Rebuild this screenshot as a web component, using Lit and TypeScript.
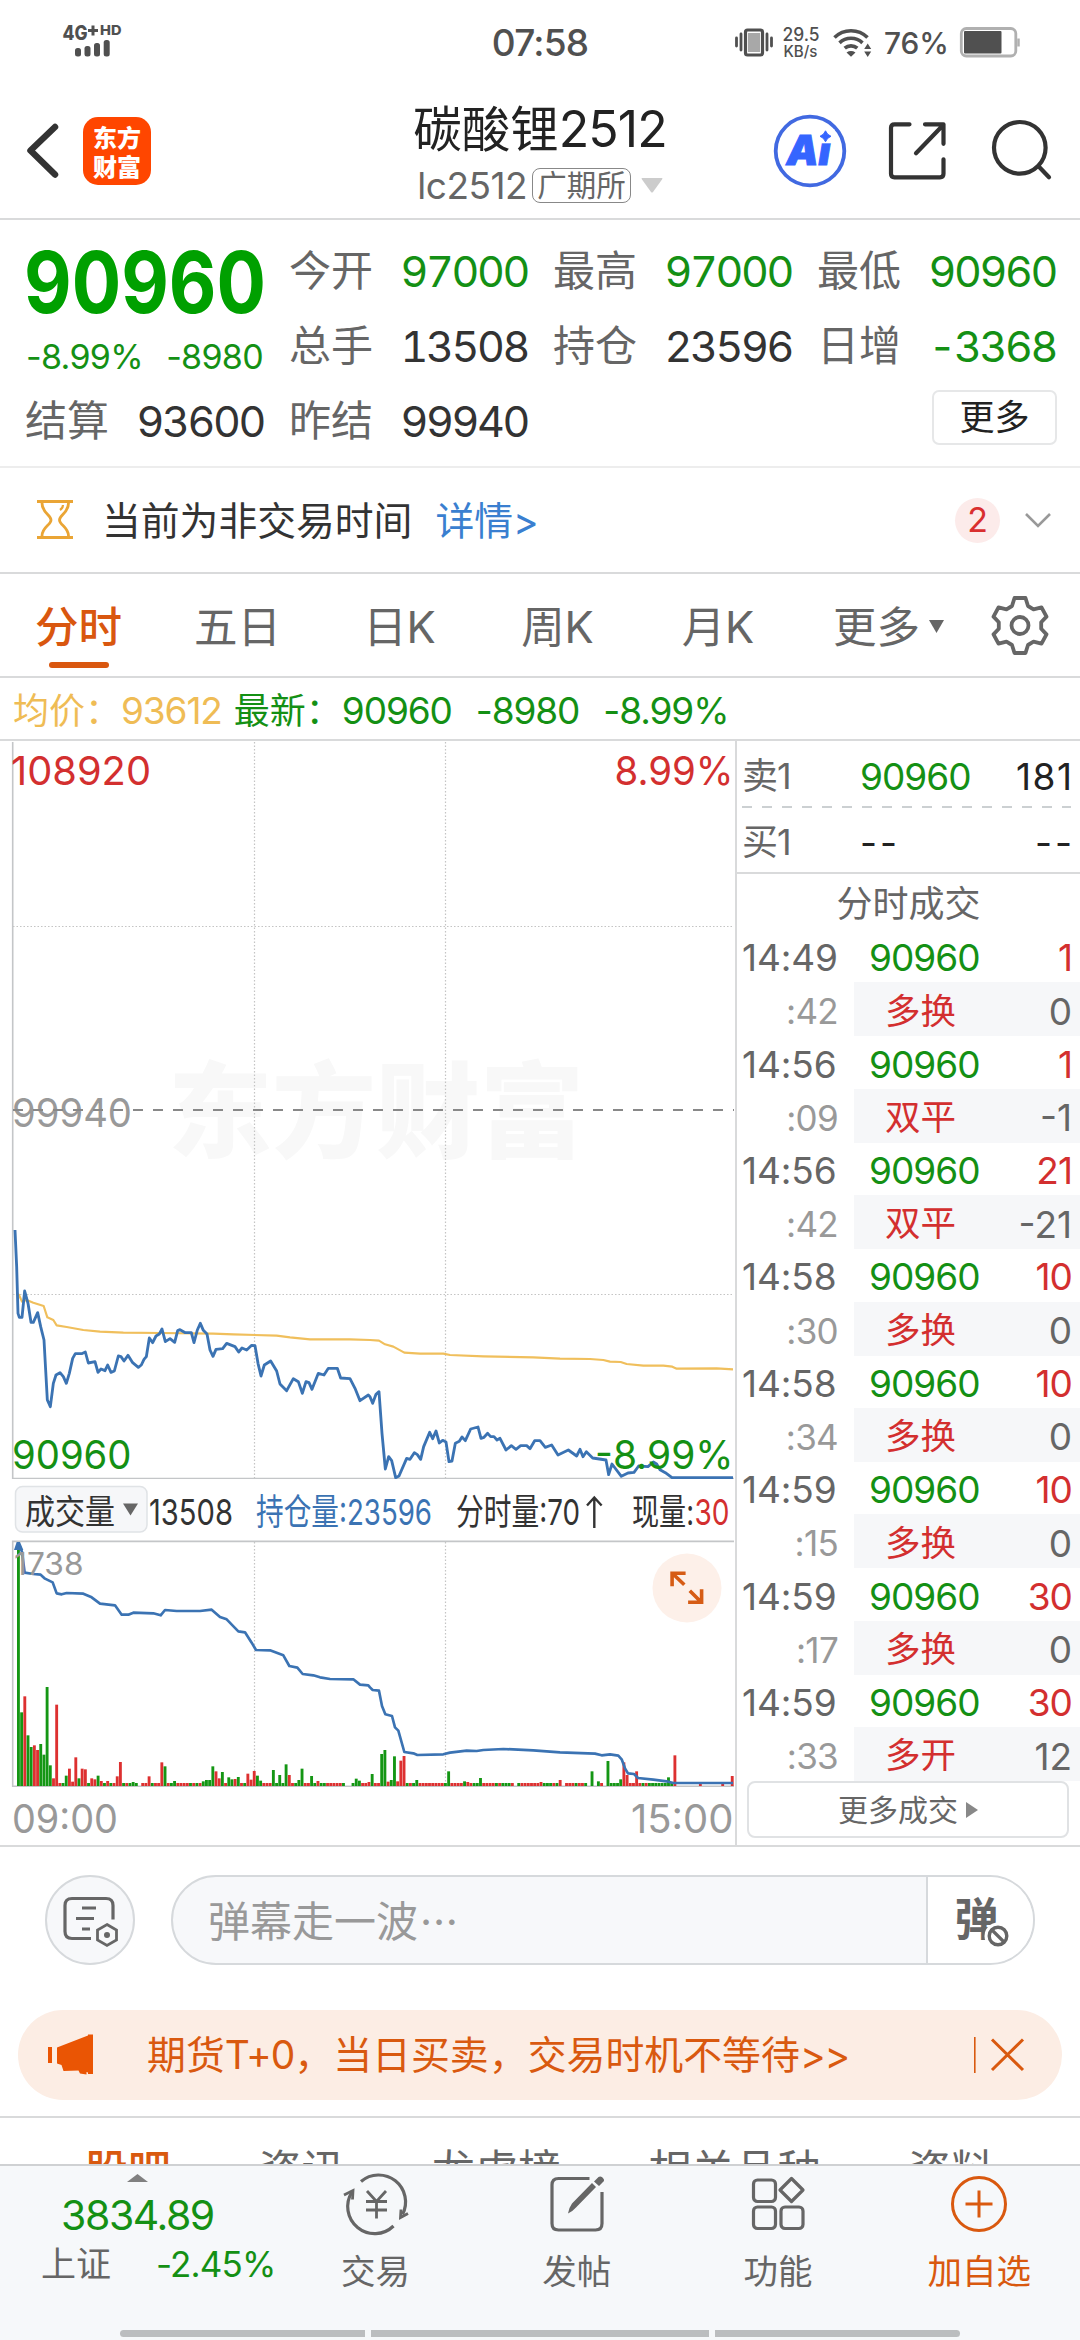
import { LitElement, html, svg, css } from "lit";
import { customElement } from "lit/decorators.js";

const PRICE =
  "45,150 50,260 54,400 58,412 66,412 74,333 84,370 93,427 100,427 113,398 122,440 132,480 137,570 142,660 151,680 160,610 168,585 180,578 190,590 199,610 208,580 218,535 226,521 245,521 256,516 265,549 285,545 294,577 303,567 315,572 323,555 333,577 343,573 355,528 363,530 372,543 384,526 398,548 415,562 424,555 432,538 439,530 448,474 458,488 468,468 478,462 486,447 496,485 510,476 524,487 533,452 540,449 556,458 574,458 582,488 592,450 601,430 610,451 621,462 630,510 639,529 648,508 668,506 680,490 705,500 716,516 726,504 740,510 755,496 765,497 774,550 783,588 793,555 812,543 830,573 840,612 860,632 880,596 895,605 907,640 918,605 927,608 936,628 955,580 972,585 985,565 1012,565 1022,594 1050,596 1065,625 1080,662 1105,645 1110,650 1118,670 1128,643 1137,635 1146,760 1156,867 1166,830 1175,842 1187,893 1197,888 1220,835 1230,838 1243,818 1252,824 1262,838 1271,800 1289,757 1298,776 1308,753 1318,789 1328,781 1338,786 1347,845 1356,843 1366,790 1378,784 1386,771 1396,782 1412,747 1434,741 1443,775 1452,772 1463,760 1472,770 1482,770 1491,780 1500,775 1518,810 1534,797 1548,808 1562,797 1580,797 1590,806 1604,782 1620,782 1636,802 1655,795 1674,825 1705,810 1730,828 1740,808 1749,830 1759,815 1778,834 1818,840 1826,884 1836,852 1864,889 1884,879 1902,877 1916,858 1944,860 1960,846 1970,852 1980,869 1996,878 2016,893 2199,893";
const AVERAGE =
  "50,340 57,345 66,365 80,360 100,368 131,378 142,412 160,420 170,436 200,441 250,450 300,455 370,458 480,459 640,461 700,463 830,467 870,472 930,478 1050,478 1110,480 1137,482 1155,493 1180,500 1213,518 1260,521 1330,521 1350,525 1450,529 1600,532 1680,536 1770,537 1810,540 1830,545 1862,546 1880,552 1930,557 1990,557 2017,560 2030,566 2150,565 2199,568";
const INTEREST =
  "55,190 66,215 74,278 100,282 122,284 135,296 158,307 170,340 185,343 200,339 250,341 275,352 300,371 345,376 365,404 385,404 400,398 460,400 482,406 495,390 530,393 600,393 635,389 660,411 680,418 715,454 735,457 755,488 768,510 810,511 850,526 868,558 892,563 908,582 940,586 960,592 990,597 1060,598 1080,614 1105,616 1110,622 1118,630 1137,632 1146,678 1156,703 1176,708 1185,742 1195,752 1213,816 1240,820 1252,825 1330,823 1350,818 1400,812 1430,813 1450,810 1510,807 1600,811 1680,817 1785,821 1805,826 1830,823 1855,827 1865,838 1875,865 1884,880 1902,882 1914,894 1960,899 2000,904 2020,909 2199,909";

/* minute index -> colour and height of the volume bar, where it stands out */
const TALL: Record<number, [string, number]> = {
  0: ["g", 713], 1: ["g", 221], 2: ["r", 269], 3: ["g", 152], 4: ["g", 117], 5: ["r", 122], 6: ["r", 108], 7: ["g", 126],
  8: ["g", 94], 9: ["g", 297], 10: ["g", 62], 11: ["r", 23], 12: ["r", 244], 15: ["g", 31], 16: ["r", 52], 17: ["r", 13],
  18: ["r", 86], 19: ["g", 23], 20: ["r", 52], 21: ["r", 50], 23: ["r", 23], 24: ["r", 20], 25: ["g", 31], 26: ["r", 15],
  28: ["r", 15], 31: ["r", 29], 32: ["r", 72], 36: ["g", 12], 41: ["r", 29], 45: ["r", 71], 46: ["g", 59], 49: ["g", 15],
  58: ["g", 14], 59: ["g", 18], 60: ["g", 18], 61: ["g", 59], 62: ["r", 44], 63: ["r", 23], 64: ["g", 42], 66: ["g", 26],
  67: ["g", 20], 68: ["r", 21], 69: ["g", 27], 72: ["r", 37], 73: ["r", 19], 74: ["r", 45], 75: ["g", 31], 76: ["g", 16],
  80: ["g", 48], 82: ["g", 33], 84: ["g", 65], 85: ["r", 33], 88: ["g", 18], 89: ["g", 52], 92: ["g", 30], 94: ["r", 15],
  106: ["g", 22], 107: ["g", 16], 110: ["r", 12], 111: ["g", 36], 114: ["g", 96], 115: ["g", 108], 116: ["r", 13],
  117: ["g", 18], 118: ["g", 89], 119: ["r", 14], 120: ["r", 76], 121: ["r", 90], 125: ["g", 18], 135: ["g", 44],
  140: ["g", 14], 141: ["r", 12], 145: ["g", 24], 164: ["r", 12], 170: ["r", 18], 180: ["g", 44], 182: ["g", 14],
  185: ["g", 75], 189: ["g", 20], 190: ["r", 71], 191: ["r", 33], 194: ["r", 44], 204: ["g", 26], 206: ["r", 92],
  214: ["r", 6], 221: ["r", 6], 224: ["r", 30],
};
const EMPTY = new Set([38, 103, 104, 156, 171, 179, 181, 184]);
const LOW_GREEN = new Set([
  14, 22, 27, 29, 33, 35, 37, 42, 48, 54, 56, 71, 81, 83, 87, 93, 95, 96, 102, 105, 122, 124, 134, 143, 144, 150, 152, 153,
  154, 157, 165, 166, 167, 169, 175, 178, 186, 187, 188, 196, 198, 199, 200, 201, 202, 203, 205,
]);

const TRADES = [
  ["14:49", "1", ":42", "多换", "0"],
  ["14:56", "1", ":09", "双平", "-1"],
  ["14:56", "21", ":42", "双平", "-21"],
  ["14:58", "10", ":30", "多换", "0"],
  ["14:58", "10", ":34", "多换", "0"],
  ["14:59", "10", ":15", "多换", "0"],
  ["14:59", "30", ":17", "多换", "0"],
  ["14:59", "30", ":33", "多开", "12"],
];

const volumeBars = () => {
  const out = [];
  for (let i = 0; i < 225; i++) {
    const tall = TALL[i];
    if (!tall && (EMPTY.has(i) || i > 206)) continue;
    const [c, h] = tall ?? [LOW_GREEN.has(i) ? "g" : "r", 9];
    out.push(svg`<rect x=${(51 + 9.56 * i).toFixed(1)} y=${918 - h} width="8.6" height=${h} fill=${c === "g" ? "#149614" : "#dd3030"} />`);
  }
  return out;
};

@customElement("status-bar")
class StatusBar extends LitElement {
  static styles = css`
    :host { display: grid; grid-template-columns: 1fr auto 1fr; height: 84px; align-items: center; color: #505050; }
    .time { font-size: 37px; font-weight: 500; letter-spacing: -0.8px; line-height: 1; }
    .left { padding-left: 60px; }
    .right { display: flex; justify-content: flex-end; padding-right: 58px; }
    svg { display: block; }
  `;
  render() {
    return html`
      <div class="left">
        <svg width="70" height="84" viewBox="60 0 70 84" fill="#505050">
          <text x="62.5" y="40" font-size="20" font-weight="800" textLength="25" lengthAdjust="spacingAndGlyphs">4G</text>
          <path d="M88 30.5h10M93 25.5v10" stroke="#505050" stroke-width="3" />
          <text x="100" y="35.3" font-size="13.5" font-weight="800" textLength="21.5" lengthAdjust="spacingAndGlyphs">HD</text>
          <rect x="75" y="48" width="6" height="8.5" rx="2.5" /><rect x="84.5" y="46" width="6" height="10.5" rx="2.5" />
          <rect x="94" y="43" width="6" height="13.5" rx="2.5" /><rect x="103.7" y="40" width="6" height="16.5" rx="2.5" />
        </svg>
      </div>
      <div class="time">07:58</div>
      <div class="right">
        <svg width="290" height="84" viewBox="732 0 290 84" fill="#505050">
          <rect x="745.5" y="30" width="17" height="25" rx="2" fill="none" stroke="#505050" stroke-width="3.2" />
          <rect x="748" y="33" width="12" height="19" fill="#a8a8a8" />
          <path d="M741 34v16M736.5 38v8M767 34v16M771.5 38v8" stroke="#505050" stroke-width="2.8" stroke-linecap="round" />
          <text x="782.5" y="41" font-size="18" font-weight="500" textLength="37" lengthAdjust="spacingAndGlyphs">29.5</text>
          <text x="783.5" y="57" font-size="15.5" font-weight="500" textLength="34" lengthAdjust="spacingAndGlyphs">KB/s</text>
          <g fill="none" stroke="#505050" stroke-width="3.6">
            <path d="M834.5 37.5a23.5 23.5 0 0 1 33 0" /><path d="M839.5 42.8a17 17 0 0 1 23 0" /><path d="M844.7 48.2a9.6 9.6 0 0 1 12.6 0" />
          </g>
          <path d="M846.5 52.5q4.5-2.8 9 0L851 56.8zM867.7 43.5l3.5 5.5h-7zM867.7 57l3.5-5.5h-7z" />
          <text x="884" y="54" font-size="29.5" font-weight="500" textLength="65" lengthAdjust="spacingAndGlyphs">76%</text>
          <rect x="961.3" y="28.5" width="54.5" height="27.5" rx="5" fill="none" stroke="#b0b0b0" stroke-width="2.8" />
          <rect x="964" y="31" width="37.5" height="22.5" rx="1" />
          <path d="M1018.5 38.5v8" stroke="#b0b0b0" stroke-width="2.5" />
        </svg>
      </div>
    `;
  }
}

@customElement("page-header")
class PageHeader extends LitElement {
  static styles = css`
    :host { display: grid; grid-template-columns: 1fr auto 1fr; height: 134px; align-items: center; border-bottom: 2px solid #d9dadb; }
    .left, .right { display: flex; align-items: center; }
    .left { padding-left: 24px; }
    .logo { display: grid; place-content: center; width: 68px; height: 68px; margin-left: 23px; border-radius: 15px; background: #ff4600; color: #fff; font: 900 24px/29px "Noto Sans CJK SC", sans-serif; }
    .mid { display: flex; flex-direction: column; align-items: center; }
    .name { font-size: 48.5px; line-height: 60px; color: #222; }
    .name span { letter-spacing: -0.9px; font-size: 50px; }
    .sub { display: flex; align-items: center; margin-top: 8px; height: 36px; color: #666; }
    .code { font-size: 37px; letter-spacing: -0.5px; line-height: 1; }
    .tag { margin-left: 5px; border: 1.5px solid #888; border-radius: 8px; height: 33px; padding: 0 4px; font-size: 29.5px; line-height: 32px; }
    .sub svg { margin-left: 10px; }
    .right { justify-content: flex-end; padding-right: 27px; }
    svg { display: block; }
    .share { margin-left: 38px; }
    .find { margin-left: 40px; }
  `;
  render() {
    return html`
      <div class="left">
        <svg width="36" height="66" viewBox="24 119 36 66" fill="none" stroke="#333" stroke-width="6.5" stroke-linecap="round" stroke-linejoin="round"><path d="M55 128L30.5 151.5 55 175.5" /></svg>
        <div class="logo"><span>东方</span><span>财富</span></div>
      </div>
      <div class="mid">
        <div class="name">碳酸锂<span>2512</span></div>
        <div class="sub">
          <span class="code">lc2512</span><span class="tag">广期所</span>
          <svg width="22" height="15" viewBox="0 0 22 15"><path d="M1 0h20q1 0 0 1.5L12 14q-1 1-2 0L1 1.5Q0 0 1 0z" fill="#ccc" /></svg>
        </div>
      </div>
      <div class="right">
        <svg width="74" height="74" viewBox="771.5 114.7 74 74">
          <circle cx="808.5" cy="151.7" r="34.3" fill="#fff" stroke="#4169e1" stroke-width="3.8" />
          <text x="785" y="165.5" font-size="41" font-weight="900" font-style="italic" fill="#3565ff" stroke="#3565ff" stroke-width="1" textLength="44" lengthAdjust="spacingAndGlyphs">Ai</text>
          <rect x="815" y="130" width="18" height="14" fill="#fff" />
          <path d="M824 131.5q1.5 4 5.5 5.5-4 1.5-5.5 5.5-1.5-4-5.5-5.5 4-1.5 5.5-5.5z" fill="#3565ff" stroke="#3565ff" />
        </svg>
        <svg class="share" width="64" height="64" viewBox="884.5 119.7 64 64" fill="none" stroke="#333" stroke-width="4.2" stroke-linecap="round" stroke-linejoin="round">
          <path d="M909 125h-15q-3.5 0-3.5 3.5v46q0 3.5 3.5 3.5h45.5q3.5 0 3.5-3.5V160M924.5 125h18.5v19.5M915.5 154L942 126.5" />
        </svg>
        <svg class="find" width="64" height="64" viewBox="988 119.7 64 64" fill="none" stroke="#333" stroke-width="4.2" stroke-linecap="round">
          <circle cx="1018.8" cy="148.5" r="25.8" /><path d="M1037.5 167l10.5 11" />
        </svg>
      </div>
    `;
  }
}

@customElement("quote-panel")
class QuotePanel extends LitElement {
  static styles = css`
    :host { display: block; border-bottom: 2px solid #ededed; height: 248px; box-sizing: border-box; padding: 13.5px 25px 0; }
    .grid { display: grid; grid-template-columns: repeat(4, 238px); grid-auto-rows: 75px; column-gap: 26px; align-items: center; }
    .cell { display: flex; justify-content: space-between; align-items: center; font-size: 43px; line-height: 1; color: #333; white-space: nowrap; }
    .cell i { font-style: normal; color: #666; font-size: 42px; }
    .cell b { font-weight: 400; letter-spacing: -0.055em; margin-right: -1px; font-variant-numeric: tabular-nums; }
    .cell .g { color: #149014; }
    .big { display: block; margin-top: 18px; overflow: visible; }
    .cell.chg { font-size: 34px; letter-spacing: -0.02em; color: #149014; padding: 22px 0 0 1px; }
    .more { justify-self: end; margin: -7px -2px 0 0; box-sizing: border-box; width: 125px; height: 55px; border: 2px solid #e6e7e8; border-radius: 7px; display: grid; place-items: center; font-size: 35px; color: #222; line-height: 1; }
  `;
  render() {
    const cell = (k: string, v: string, up = false) => html`<div class="cell"><i>${k}</i><b class=${up ? "g" : ""}>${v}</b></div>`;
    return html`
      <div class="grid">
        <svg class="big" width="238" height="75" viewBox="0 0 238 75"><text x="-1" y="70" font-size="85" font-weight="650" fill="#00a000" textLength="242" lengthAdjust="spacingAndGlyphs">90960</text></svg>
        ${cell("今开", "97000", true)} ${cell("最高", "97000", true)} ${cell("最低", "90960", true)}
        <div class="cell chg"><span>-8.99%</span><span>-8980</span></div>
        ${cell("总手", "13508")} ${cell("持仓", "23596")} ${cell("日增", "-3368", true)}
        ${cell("结算", "93600")} ${cell("昨结", "99940")}
        <div></div>
        <div class="more">更多</div>
      </div>
    `;
  }
}

@customElement("notice-row")
class NoticeRow extends LitElement {
  static styles = css`
    :host { display: flex; align-items: center; height: 104px; border-bottom: 2px solid #d9dadb; padding: 0 28px 0 35px; font-size: 38.8px; color: #333; line-height: 1; }
    .txt { margin-left: 27px; padding-top: 2px; }
    a { color: #3a7fd0; margin-left: 23px; padding-top: 2px; }
    .badge { margin-left: auto; width: 45px; height: 45px; border-radius: 50%; background: #fcebea; color: #d92f2f; font-size: 34px; display: grid; place-items: center; }
    .chev { margin-left: 24px; }
  `;
  render() {
    return html`
      <svg width="40" height="44" viewBox="35 499 40 44" fill="none" stroke="#eaa535" stroke-width="2.8">
        <path d="M37 502.5h36M37 538.5h36" stroke-width="3.2" /><path d="M42 504c0 10 9 12 9 17s-9 7-9 16M68.5 504c0 10-9 12-9 17s9 7 9 16" /><path d="M63 506q0 3-3 5" stroke-width="2.2" />
      </svg>
      <span class="txt">当前为非交易时间</span><a>详情&gt;</a>
      <span class="badge">2</span>
      <svg class="chev" width="28" height="18" viewBox="0 0 28 18" fill="none" stroke="#999" stroke-width="2.6"><path d="M2 3l12 12L26 3" /></svg>
    `;
  }
}

@customElement("period-tabs")
class PeriodTabs extends LitElement {
  static styles = css`
    :host { display: grid; grid-template-columns: 157px 161px 163px 153px 168px 173px 89px; height: 102px; border-bottom: 2px solid #d9dadb; align-items: center; justify-items: center; font-size: 43.5px; line-height: 1; color: #666; }
    .tab { height: 100%; display: flex; align-items: center; position: relative; padding-top: 6px; box-sizing: border-box; }
    .on { color: #d9570f; font-weight: 500; }
    .on::after { content: ""; position: absolute; left: 14px; bottom: 8px; width: 60px; height: 6px; border-radius: 3px; background: #d9570f; }
    .tri { margin: -4px 0 0 9px; }
  `;
  render() {
    const teeth = "M1013 602h11l2.5 8 5.5 3.3 8-2 5 9.3-5.3 5.6v6.6l5.3 5.6-5 9.3-8-2-5.5 3.3-2.5 8h-11l-2.5-8-5.5-3.3-8 2-5-9.3 5.3-5.6v-6.6l-5.3-5.6 5-9.3 8 2 5.5-3.3z";
    return html`
      <div class="tab on">分时</div><div class="tab">五日</div><div class="tab">日K</div><div class="tab">周K</div><div class="tab">月K</div>
      <div class="tab">更多<svg class="tri" width="15" height="13" viewBox="0 0 15 13"><path d="M0 0h15L7.5 13z" fill="#666" /></svg></div>
      <svg width="58" height="60" viewBox="989.5 599 58 60" fill="none" stroke="#666" stroke-width="3.8" stroke-linejoin="round"><path d=${teeth} /><circle cx="1018.5" cy="629.5" r="8.5" /></svg>
    `;
  }
}

@customElement("trend-chart")
class TrendChart extends LitElement {
  static styles = css`
    :host { display: block; width: 735px; }
    svg { display: block; }
    .vol { position: relative; }
    .full { position: absolute; left: 652px; top: 13px; }
  `;
  render() {
    const fit = "spacingAndGlyphs";
    return html`
      <svg width="735" height="738" viewBox="0 741 735 738" fill="none">
        <text x="168" y="1150" font-size="104" font-weight="900" fill="#f8f8f8" textLength="416">东方财富</text>
        <g stroke="#c4c4c4" stroke-width="1.2">
          <path d="M254.5 742V1478M445.5 742V1478M13 926.5H734M13 1294.5H734" stroke-dasharray="1.5 2" />
        </g>
        <path d="M12.7 742V1478.5H734" stroke="#c4c6c8" stroke-width="1.6" />
        <text x="12" y="1126.5" font-size="40" fill="#999" textLength="120" lengthAdjust=${fit}>99940</text>
        <path d="M13 1110H734" stroke="#888" stroke-width="2" stroke-dasharray="10 10" />
        <text x="11" y="784.5" font-size="40" fill="#d32f2f" textLength="140" lengthAdjust=${fit}>108920</text>
        <text x="614.5" y="784.5" font-size="40" fill="#d32f2f" textLength="119" lengthAdjust=${fit}>8.99%</text>
        <g transform="translate(0 1180) scale(.33333)" stroke-linejoin="round">
          <polyline points=${AVERAGE} stroke="#f0bf5c" stroke-width="6.5" />
          <polyline points=${PRICE} stroke="#3b73b3" stroke-width="8.5" />
        </g>
        <text x="12" y="1468.5" font-size="40" fill="#149014" textLength="119.5" lengthAdjust=${fit}>90960</text>
        <text x="595" y="1468.5" font-size="40" fill="#149014" textLength="138.5" lengthAdjust=${fit}>-8.99%</text>
      </svg>
      <svg width="735" height="61" viewBox="0 1479 735 61" font-size="36" fill="#333">
        <rect x="15.5" y="1486.5" width="131.5" height="45.5" rx="7" fill="#f6f7f9" stroke="#e0e3e6" stroke-width="1.5" />
        <text x="25" y="1524" font-size="34" textLength="90" lengthAdjust=${fit}>成交量</text>
        <path d="M123 1503.5h15l-7.5 12z" fill="#666" />
        <text x="149" y="1524.5" textLength="84" lengthAdjust=${fit}>13508</text>
        <text x="256" y="1524.5" fill="#3b73b3" textLength="176" lengthAdjust=${fit}>持仓量:23596</text>
        <text x="456" y="1524.5" textLength="124" lengthAdjust=${fit}>分时量:70</text>
        <path d="M594.3 1528v-30M587 1505.5l7.3-8 7.3 8" fill="none" stroke="#333" stroke-width="2.4" />
        <text x="632" y="1524.5" textLength="62" lengthAdjust=${fit}>现量:</text>
        <text x="694.5" y="1524.5" fill="#d32f2f" textLength="35" lengthAdjust=${fit}>30</text>
      </svg>
      <div class="vol">
        <svg width="735" height="306" viewBox="0 1540 735 306" fill="none">
          <path d="M254.5 1542V1786M445.5 1542V1786" stroke="#c4c4c4" stroke-width="1.2" stroke-dasharray="1.5 2" />
          <path d="M734 1541.4H12.7V1786.3H734" stroke="#c4c6c8" stroke-width="1.6" />
          <g transform="translate(0 1480) scale(.33333)" stroke-linejoin="round">
            ${volumeBars()}
            <polyline points=${INTEREST} stroke="#3b73b3" stroke-width="8" />
            <path d="M42 210L50 186h10l10 24z" fill="#3b73b3" />
          </g>
          <text x="14" y="1574.5" font-size="31" fill="#999" textLength="69.5" lengthAdjust=${fit}>1738</text>
          <text x="12" y="1832.5" font-size="39.5" fill="#999" textLength="106" lengthAdjust=${fit}>09:00</text>
          <text x="631" y="1832.5" font-size="39.5" fill="#999" textLength="102.5" lengthAdjust=${fit}>15:00</text>
        </svg>
        <svg class="full" width="70" height="70" viewBox="651.7 1552.7 70 70" fill="none" stroke="#d65c15" stroke-width="3.6">
          <circle cx="686.7" cy="1587.7" r="34.5" fill="#fdf0e9" stroke="none" />
          <path d="M671.8 1586v-13h13.5M672.5 1573.5l11.5 11M701.3 1589v13h-13.5M700.5 1601.5l-11-11" />
        </svg>
      </div>
    `;
  }
}

@customElement("trade-panel")
class TradePanel extends LitElement {
  static styles = css`
    :host { display: block; width: 345px; box-sizing: border-box; border-left: 2px solid #d9dadb; font-size: 37px; line-height: 1; color: #666; }
    .row { box-sizing: border-box; display: grid; grid-template-columns: 118px 1fr auto; align-items: center; height: 65px; padding: 5px 8px 0 5px; letter-spacing: -0.026em; }
    .row .lab { font-size: 36px; }
    .g { color: #149014; }
    .k { color: #222; letter-spacing: 0.04em; margin-right: -0.04em; }
    .r { color: #d32f2f; }
    .dash { height: 2px; margin: 0 9px 0 5px; background: repeating-linear-gradient(90deg, #ccd0d2 0 10px, transparent 10px 20px); }
    .row.buy { height: 66px; border-bottom: 2px solid #d9dadb; padding-top: 4px; }
    .dd { letter-spacing: 3px; margin-right: -3px; }
    .title { height: 56px; display: grid; place-items: center; font-size: 36px; box-sizing: border-box; padding-top: 3px; }
    .main { display: grid; grid-template-columns: 127px 1fr auto; align-items: center; height: 52.4px; padding: 3px 8px 0 5px; box-sizing: border-box; letter-spacing: -0.026em; }
    .time { letter-spacing: -0.003em; }
    .subrow { display: grid; grid-template-columns: 101px 1fr; height: 54px; align-items: center; }
    .sec { color: #999; font-size: 35px; text-align: right; letter-spacing: -0.02em; padding-top: 5px; }
    .band { display: flex; justify-content: space-between; align-items: center; height: 100%; margin-left: 16px; padding: 4px 8px 0 31px; box-sizing: border-box; background: #f6f7f9; }
    .band .r { font-size: 35.5px; }
    .more { box-sizing: border-box; margin: 0 11px 0 10px; height: 57px; border: 2px solid #e0e2e4; border-radius: 8px; display: flex; align-items: center; justify-content: center; font-size: 30px; gap: 8px; }
  `;
  render() {
    return html`
      <div class="row"><span class="lab">卖1</span><span class="g">90960</span><span class="k">181</span></div>
      <div class="dash"></div>
      <div class="row buy"><span class="lab">买1</span><span class="k dd">--</span><span class="k dd">--</span></div>
      <div class="title">分时成交</div>
      ${TRADES.map(
        ([t, q, s, kind, d]) => html`
          <div class="main"><span class="time">${t}</span><span class="g">90960</span><span class="r">${q}</span></div>
          <div class="subrow"><span class="sec">${s}</span><span class="band"><span class="r">${kind}</span><span>${d}</span></span></div>
        `
      )}
      <div class="more">更多成交<svg width="12" height="16" viewBox="0 0 12 16"><path d="M0 0l12 8L0 16z" fill="#888" /></svg></div>
    `;
  }
}

@customElement("comment-bar")
class CommentBar extends LitElement {
  static styles = css`
    :host { display: flex; align-items: center; gap: 36px; padding: 28px 45px 0; }
    .round { box-sizing: border-box; width: 90px; height: 90px; border: 2px solid #d6d9dc; border-radius: 50%; background: #f7f8fa; display: grid; place-items: center; }
    .box { box-sizing: border-box; width: 864px; height: 90px; border: 2px solid #d6d9dc; border-radius: 45px; display: flex; overflow: hidden; background: #f7f8fa; }
    .ph { flex: 1; display: flex; align-items: center; padding: 3px 0 0 35px; font-size: 42px; color: #999; line-height: 1; }
    .ph span { margin-left: 2px; letter-spacing: 0.8px; }
    .dm { width: 105px; background: #fff; border-left: 2px solid #d6d9dc; display: grid; place-items: center; }
  `;
  render() {
    return html`
      <div class="round">
        <svg width="60" height="56" viewBox="61 1892 60 56" fill="none" stroke="#666" stroke-width="3.2">
          <path d="M92 1938.5H73q-7 0-7-7v-26q0-7 7-7h34q7 0 7 7v14M83 1908h14M77 1918.5h18M83 1929h8" />
          <path d="M108 1924.5l9.5 5.5v10l-9.5 5.5-9.5-5.5v-10z" stroke-width="2.8" /><circle cx="108" cy="1935" r="3" fill="#666" stroke="none" />
        </svg>
      </div>
      <div class="box">
        <div class="ph">弹幕走一波<span>···</span></div>
        <div class="dm">
          <svg width="60" height="60" viewBox="951 1890 60 60">
            <text x="954.5" y="1935.5" font-size="45" font-weight="700" fill="#666" textLength="44" lengthAdjust="spacingAndGlyphs">弹</text>
            <circle cx="998" cy="1936" r="13.5" fill="#fff" /><circle cx="998" cy="1936" r="8.8" fill="none" stroke="#666" stroke-width="3.4" /><path d="M992 1930l12 12" stroke="#666" stroke-width="3.2" />
          </svg>
        </div>
      </div>
    `;
  }
}

@customElement("promo-banner")
class PromoBanner extends LitElement {
  static styles = css`
    :host { display: flex; align-items: center; height: 90px; margin: 45px 18px 0; border-radius: 45px; background: #fcede4; color: #d9590f; font-size: 38.9px; line-height: 1; }
    .horn { margin-left: 29px; }
    .txt { margin-left: 52px; white-space: nowrap; }
    .txt span { letter-spacing: -1px; }
    .end { margin: 0 35px 0 auto; }
  `;
  render() {
    return html`
      <svg class="horn" width="48" height="44" viewBox="47 2033 48 44" fill="#ea5504"><path d="M48 2047h4v16h-4zM57 2047.5L88 2035.5V2034.5h5v39.5h-5v-1.5l-1.5-.5v2.5L80 2073.5l-1.5-3-15 .5-2-6-4.5-1.5z" /></svg>
      <span class="txt">期货<span>T+0</span>，当日买卖，交易时机不等待<span>&gt;&gt;</span></span>
      <svg class="end" width="54" height="40" viewBox="973 2035 54 40" fill="none" stroke="#d9590f"><path d="M974.8 2037v36" stroke-width="1.6" /><path d="M992 2039.5l31 30.5M1023 2039.5l-31 30.5" stroke-width="3" /></svg>
    `;
  }
}

@customElement("bottom-bar")
class BottomBar extends LitElement {
  static styles = css`
    :host { display: block; height: 176px; box-sizing: border-box; border-top: 2px solid #cfd1d3; background: #f6f8fa; }
    .items { display: grid; grid-template-columns: 275px repeat(4, 201.2px); height: 164px; line-height: 1; color: #666; }
    .idx { display: flex; flex-direction: column; align-items: center; padding-top: 8px; }
    .val { margin-top: 13px; font-size: 41px; letter-spacing: -0.035em; color: #149014; }
    .line { display: flex; align-items: center; gap: 45px; font-size: 35px; margin: 11px 0 0 41px; white-space: nowrap; align-self: flex-start; }
    .line b { font-weight: 400; color: #149014; letter-spacing: -0.025em; }
    .it { display: flex; flex-direction: column; align-items: center; padding-top: 6px; font-size: 34.5px; gap: 19px; }
    .hot { color: #d9590f; }
    .home { display: grid; grid-template-columns: 245px 338px 245px; gap: 6px; padding-left: 120px; }
    .home span { height: 7px; background: #bbbdbf; }
    .home span:first-child { border-radius: 4px 0 0 4px; }
    .home span:last-child { border-radius: 0 4px 4px 0; }
    svg { display: block; }
  `;
  render() {
    return html`
      <div class="items">
        <div class="idx">
          <svg width="21" height="8" viewBox="0 0 21 8"><path d="M10.5 0L21 8H0z" fill="#808080" /></svg>
          <span class="val">3834.89</span>
          <div class="line"><span>上证</span><b>-2.45%</b></div>
        </div>
        <div class="it">
          <svg width="68" height="64" viewBox="341.5 2172 68 64" fill="none" stroke="#666" stroke-width="3.2">
            <path d="M360.5 2181.5a27 27 0 0 1 41.5 33M393 2226a27 27 0 0 1-41.5-34" /><path d="M343.5 2195l9-4.5-.5 9M407.5 2213.5l-7.5 4 .5-8" stroke-width="2.8" />
            <path d="M366.5 2191l9.5 10.5 9.5-10.5M376 2201.5v17M365.5 2201.5h21M365.5 2210h21" stroke-width="2.8" />
          </svg>交易
        </div>
        <div class="it">
          <svg width="64" height="64" viewBox="545.5 2172 64 64" fill="none" stroke="#666" stroke-width="3.2">
            <path d="M590 2178.5h-31q-6.5 0-6.5 6.5v38.5q0 6.5 6.5 6.5h37q6.5 0 6.5-6.5V2192" /><path d="M568.5 2213.5q1-6 4-10l20-20.5 4 4-20 20.5q-3 3.5-8 6zM594.5 2181.5l4.5-4.5q2-1 4 .5t1.5 3.5l-5 5z" fill="#666" stroke="none" />
          </svg>发帖
        </div>
        <div class="it">
          <svg width="64" height="64" viewBox="746 2172 64 64" fill="none" stroke="#666" stroke-width="3.2" stroke-linejoin="round">
            <rect x="753.5" y="2180" width="22" height="21.5" rx="4" /><rect x="753.5" y="2207" width="22" height="21.5" rx="4" /><rect x="781" y="2207" width="22" height="21.5" rx="4" /><path d="M791.5 2178.5L803 2190l-11.5 11.5L780 2190z" />
          </svg>功能
        </div>
        <div class="it hot">
          <svg width="64" height="64" viewBox="947 2172 64 64" fill="none" stroke="#d9590f" stroke-width="3"><circle cx="979" cy="2204" r="26.5" /><path d="M979 2190.5v27M965.5 2204h27" /></svg>加自选
        </div>
      </div>
      <div class="home"><span></span><span></span><span></span></div>
    `;
  }
}

@customElement("app-root")
class AppRoot extends LitElement {
  static styles = css`
    :host { display: flex; flex-direction: column; width: 1080px; height: 2340px; overflow: hidden; background: #fff; font-family: Inter, "Noto Sans CJK SC", sans-serif; }
    .legend { display: flex; align-items: center; height: 61px; border-bottom: 2px solid #d9dadb; padding-left: 13px; font-size: 37px; line-height: 57px; color: #149014; white-space: nowrap; }
    .legend span, .legend > b { padding-top: 4px; }
    .legend i { font-style: normal; font-size: 36px; }
    .legend b { font-weight: 400; letter-spacing: -0.03em; }
    .avg { color: #efbc55; margin-right: 12px; }
    .legend .gap { margin-left: 24px; }
    .body { display: flex; height: 1104px; border-bottom: 2px solid #d9dadb; }
    .tabs { margin-top: 16px; border-top: 2px solid #d9dadb; height: 48px; flex: none; overflow: hidden; display: flex; justify-content: space-between; padding: 0 86px 0 85px; box-sizing: border-box; font-size: 43px; line-height: 1; color: #666; }
    .tabs span { margin-top: 31px; }
    .tabs .on { color: #d9590f; font-weight: 500; }
  `;
  render() {
    return html`
      <status-bar></status-bar>
      <page-header></page-header>
      <quote-panel></quote-panel>
      <notice-row></notice-row>
      <period-tabs></period-tabs>
      <div class="legend">
        <span class="avg"><i>均价：</i><b>93612</b></span><span><i>最新：</i><b>90960</b></span><b class="gap">-8980</b><b class="gap">-8.99%</b>
      </div>
      <div class="body"><trend-chart></trend-chart><trade-panel></trade-panel></div>
      <comment-bar></comment-bar>
      <promo-banner></promo-banner>
      <div class="tabs"><span class="on">股吧</span><span>资讯</span><span>龙虎榜</span><span>相关品种</span><span>资料</span></div>
      <bottom-bar></bottom-bar>
    `;
  }
}
